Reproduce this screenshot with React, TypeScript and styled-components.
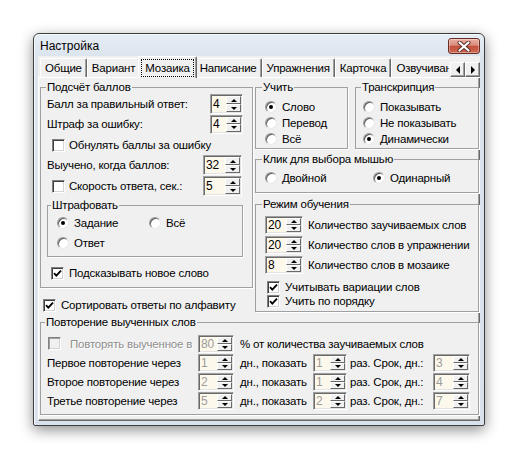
import React from "react";
import styled, { createGlobalStyle, css } from "styled-components";

const Global = createGlobalStyle`
  html, body { margin: 0; padding: 0; background: #ffffff; }
  body { font-family: "Liberation Sans", Arial, sans-serif; font-size: 11.5px; letter-spacing: -0.2px; color: #000; }
  * { box-sizing: border-box; }
`;

const Screen = styled.div`
  width: 517px;
  height: 458px;
  padding: 33px 0 0 33px;
`;

const Window = styled.div`
  width: 452px;
  height: 393px;
  border: 1px solid #3d3d3d;
  border-radius: 6px 6px 2px 2px;
  background: linear-gradient(#e6edf5, #dbe3ed 24px, #d9e2ec);
  box-shadow: 0 4px 14px rgba(0, 0, 0, 0.45), inset 1px 1px 0 #f6f9fc;
  display: flex;
  flex-direction: column;
  padding: 0 4px 4px;
`;

const TitleBar = styled.div`
  height: 22px;
  flex-shrink: 0;
  display: flex;
  align-items: center;
  justify-content: space-between;
  padding: 2px 0 0 2px;
`;

const TitleText = styled.span`
  font-size: 12px;
  letter-spacing: 0;
  color: #000;
`;

const CloseButton = styled.div`
  width: 32px;
  height: 16px;
  border: 1px solid #6b2a20;
  border-radius: 3px;
  background: linear-gradient(#eab1a4, #d98a7b 45%, #c2503c 52%, #cf6a52);
  box-shadow: inset 0 0 0 1px rgba(255, 255, 255, 0.35);
  display: flex;
  align-items: center;
  justify-content: center;
`;

const Client = styled.div`
  flex: 1;
  min-height: 0;
  background: #f0f0f0;
  display: flex;
  flex-direction: column;
`;

const TabStrip = styled.div`
  height: 22px;
  flex-shrink: 0;
  display: flex;
  align-items: flex-end;
  box-shadow: inset 0 -1px 0 #ffffff;
`;

const TabList = styled.div`
  flex: 1;
  min-width: 0;
  height: 22px;
  overflow: hidden;
  display: flex;
  align-items: flex-end;
  padding-left: 2px;
`;

const Tab = styled.div<{ $active?: boolean }>`
  flex-shrink: 0;
  white-space: nowrap;
  height: 19px;
  margin-bottom: 1px;
  padding: 0 4px;
  line-height: 18px;
  border-top: 1px solid #ffffff;
  border-left: 1px solid #ffffff;
  border-right: 1px solid #696969;
  border-radius: 2px 2px 0 0;
  box-shadow: inset -1px 0 0 #a0a0a0;
  ${({ $active }) =>
    $active &&
    css`
      position: relative;
      z-index: 1;
      height: 22px;
      margin: 0 -2px 0 -2px;
      padding: 2px 2px 0;
      background: #f0f0f0;
      line-height: 17px;
    `}
`;

const FocusLabel = styled.span`
  display: block;
  outline: 1px dotted #000;
  outline-offset: -1px;
  padding: 0 4px;
  height: 18px;
  line-height: 18px;
`;

const ScrollPair = styled.div`
  display: flex;
  margin: 0 0 1px 1px;
`;

const ClassicButton = styled.div<{ $w: number; $h: number }>`
  width: ${({ $w }) => $w}px;
  height: ${({ $h }) => $h}px;
  background: #f0f0f0;
  border: 1px solid;
  border-color: #ffffff #696969 #696969 #ffffff;
  box-shadow: inset -1px -1px 0 #a0a0a0;
  display: flex;
  align-items: center;
  justify-content: center;
`;

const Tri = styled.span<{ $dir: "up" | "down" | "left" | "right"; $s?: number }>`
  display: block;
  width: 0;
  height: 0;
  border-style: solid;
  ${({ $dir, $s = 3 }) => {
    switch ($dir) {
      case "up":
        return css`
          border-width: 0 ${$s}px ${$s}px;
          border-color: transparent transparent #000;
        `;
      case "down":
        return css`
          border-width: ${$s}px ${$s}px 0;
          border-color: #000 transparent transparent;
        `;
      case "left":
        return css`
          border-width: ${$s}px ${$s}px ${$s}px 0;
          border-color: transparent #000 transparent transparent;
        `;
      default:
        return css`
          border-width: ${$s}px 0 ${$s}px ${$s}px;
          border-color: transparent transparent transparent #000;
        `;
    }
  }}
`;

const Page = styled.div`
  flex: 1;
  min-height: 0;
  border-left: 1px solid #ffffff;
  border-right: 1px solid #696969;
  border-bottom: 1px solid #696969;
  box-shadow: inset -1px -1px 0 #a0a0a0;
  padding: 3px 0 0 1px;
`;

const TopGrid = styled.div`
  display: grid;
  grid-template-columns: 213px 224px;
  column-gap: 2px;
`;

const Column = styled.div`
  display: flex;
  flex-direction: column;
`;

const Group = styled.fieldset<{ $mt?: number }>`
  margin: ${({ $mt = 0 }) => $mt}px 0 0 0;
  padding: 0;
  min-width: 0;
  border: 1px solid #a0a0a0;
  box-shadow: 1px 1px 0 #ffffff;
`;

const Legend = styled.legend<{ $ml: number }>`
  margin-left: ${({ $ml }) => $ml}px;
  padding: 0 1px;
  line-height: 13px;
`;

const Body = styled.div<{ $p: string }>`
  padding: ${({ $p }) => $p};
  display: flex;
  flex-direction: column;
`;

const Row = styled.div<{ $h: number; $mt?: number }>`
  height: ${({ $h }) => $h}px;
  margin-top: ${({ $mt = 0 }) => $mt}px;
  display: flex;
  align-items: center;
  white-space: nowrap;
`;

const Label = styled.span<{ $dim?: boolean; $ml?: number }>`
  margin-left: ${({ $ml = 0 }) => $ml}px;
  ${({ $dim }) =>
    $dim &&
    css`
      color: #8e8e8e;
      text-shadow: 1px 1px 0 #ffffff;
    `}
`;

const Spacer = styled.span`
  flex: 1;
`;

const Item = styled.div<{ $w?: number; $ml?: number; $gap?: number }>`
  display: flex;
  align-items: center;
  gap: ${({ $gap = 4 }) => $gap}px;
  margin-left: ${({ $ml = 0 }) => $ml}px;
  ${({ $w }) => ($w ? `width: ${$w}px;` : "")}
  white-space: nowrap;
`;

const CheckBox = styled.span<{ $disabled?: boolean }>`
  width: 13px;
  height: 13px;
  flex-shrink: 0;
  background: ${({ $disabled }) => ($disabled ? "#f0f0f0" : "#ffffff")};
  border: 1px solid;
  border-color: #808080 #ffffff #ffffff #808080;
  box-shadow: inset 1px 1px 0 ${({ $disabled }) => ($disabled ? "#a0a0a0" : "#404040")},
    inset -1px -1px 0 #d4d4d4;
  display: flex;
  align-items: center;
  justify-content: center;
`;

const RadioCircle = styled.span`
  width: 12px;
  height: 12px;
  flex-shrink: 0;
  border-radius: 50%;
  background: #ffffff;
  border: 1px solid;
  border-color: #9a9a9a #e8e8e8 #e8e8e8 #9a9a9a;
  box-shadow: inset 1px 1px 0 #5a5a5a;
  display: flex;
  align-items: center;
  justify-content: center;
`;

const RadioDot = styled.span`
  width: 4px;
  height: 4px;
  border-radius: 50%;
  background: #000;
`;

const SpinBox = styled.div<{ $w: number; $h: number; $mr?: number }>`
  width: ${({ $w }) => $w}px;
  height: ${({ $h }) => $h}px;
  margin-right: ${({ $mr = 0 }) => $mr}px;
  flex-shrink: 0;
  display: flex;
  background: #fdf8ec;
  border: 1px solid;
  border-color: #a0a0a0 #ffffff #ffffff #a0a0a0;
  box-shadow: inset 1px 1px 0 #696969, inset -1px -1px 0 #e3e3e3;
  padding: 1px;
`;

const SpinValue = styled.div<{ $dim?: boolean }>`
  flex: 1;
  padding-left: 1px;
  display: flex;
  align-items: center;
  font-size: 12px;
  color: ${({ $dim }) => ($dim ? "#9c9c9c" : "#000")};
`;

const SpinButtons = styled.div`
  width: 15px;
  display: flex;
  flex-direction: column;
`;

const SpinBtn = styled.div`
  flex: 1;
  background: #f0f0f0;
  border: 1px solid;
  border-color: #ffffff #696969 #696969 #ffffff;
  display: flex;
  align-items: center;
  justify-content: center;
`;

const RepeatGrid = styled.div`
  display: grid;
  grid-template-columns: 151px 36px 79px 34px 86px 37px;
  grid-auto-rows: 19px;
  align-items: center;
  white-space: nowrap;
`;

const Cell = styled.div<{ $pl?: number; $span?: boolean }>`
  display: flex;
  align-items: center;
  padding-left: ${({ $pl = 0 }) => $pl}px;
  ${({ $span }) => ($span ? "grid-column: 3 / -1;" : "")}
`;

const TopPair = styled.div`
  display: grid;
  grid-template-columns: 93px 124px;
  column-gap: 7px;
`;

const RepeatGroup = styled(Group)`
  width: 439px;
`;

function Check({ checked, disabled }: { checked?: boolean; disabled?: boolean }) {
  return (
    <CheckBox $disabled={disabled}>
      {checked && (
        <svg width="9" height="9" viewBox="0 0 9 9">
          <path d="M1 4.2 L3.3 6.6 L8 1.6" fill="none" stroke="#000" strokeWidth="1.8" />
        </svg>
      )}
    </CheckBox>
  );
}

function CheckItem({
  text,
  checked,
  disabled,
  ml,
  gap,
}: {
  text: string;
  checked?: boolean;
  disabled?: boolean;
  ml?: number;
  gap?: number;
}) {
  return (
    <Item $ml={ml} $gap={gap}>
      <Check checked={checked} disabled={disabled} />
      <Label $dim={disabled}>{text}</Label>
    </Item>
  );
}

function Radio({ text, checked, w, ml }: { text: string; checked?: boolean; w?: number; ml?: number }) {
  return (
    <Item $w={w} $ml={ml} $gap={5}>
      <RadioCircle>{checked && <RadioDot />}</RadioCircle>
      <span>{text}</span>
    </Item>
  );
}

function Spin({
  value,
  w,
  h = 19,
  dim,
  mr,
}: {
  value: string;
  w: number;
  h?: number;
  dim?: boolean;
  mr?: number;
}) {
  return (
    <SpinBox $w={w} $h={h} $mr={mr}>
      <SpinValue $dim={dim}>{value}</SpinValue>
      <SpinButtons>
        <SpinBtn>
          <Tri $dir="up" />
        </SpinBtn>
        <SpinBtn>
          <Tri $dir="down" />
        </SpinBtn>
      </SpinButtons>
    </SpinBox>
  );
}

const tabs = ["Общие", "Вариант", "Мозаика", "Написание", "Упражнения", "Карточка", "Озвучивание"];

const repeatRows = [
  { label: "Первое повторение через", a: "1", b: "1", c: "3" },
  { label: "Второе повторение через", a: "2", b: "1", c: "4" },
  { label: "Третье повторение через", a: "5", b: "2", c: "7" },
];

export default function App() {
  return (
    <Screen>
      <Global />
      <Window>
        <TitleBar>
          <TitleText>Настройка</TitleText>
          <CloseButton>
            <svg width="14" height="11" viewBox="0 0 14 11">
              <path d="M2.5 1.5 L11.5 9.5 M11.5 1.5 L2.5 9.5" stroke="#5a2a22" strokeWidth="4" strokeLinecap="round" />
              <path d="M2.5 1.5 L11.5 9.5 M11.5 1.5 L2.5 9.5" stroke="#ffffff" strokeWidth="2.2" strokeLinecap="round" />
            </svg>
          </CloseButton>
        </TitleBar>
        <Client>
          <TabStrip>
            <TabList>
              {tabs.map((t) =>
                t === "Мозаика" ? (
                  <Tab key={t} $active>
                    <FocusLabel>{t}</FocusLabel>
                  </Tab>
                ) : (
                  <Tab key={t}>{t}</Tab>
                )
              )}
            </TabList>
            <ScrollPair>
              <ClassicButton $w={15} $h={15}>
                <Tri $dir="left" $s={4} />
              </ClassicButton>
              <ClassicButton $w={15} $h={15}>
                <Tri $dir="right" $s={4} />
              </ClassicButton>
            </ScrollPair>
          </TabStrip>
          <Page>
            <TopGrid>
              <Column>
                <Group>
                  <Legend $ml={5}>Подсчёт баллов</Legend>
                  <Body $p="0 9px 6px 6px">
                    <Row $h={20}>
                      <span>Балл за правильный ответ:</span>
                      <Spacer />
                      <Spin value="4" w={33} h={20} />
                    </Row>
                    <Row $h={20}>
                      <span>Штраф за ошибку:</span>
                      <Spacer />
                      <Spin value="4" w={33} h={19} />
                    </Row>
                    <Row $h={20} $mt={1}>
                      <CheckItem text="Обнулять баллы за ошибку" ml={5} />
                    </Row>
                    <Row $h={20}>
                      <span>Выучено, когда баллов:</span>
                      <Spacer />
                      <Spin value="32" w={39} h={20} mr={1} />
                    </Row>
                    <Row $h={20} $mt={1}>
                      <CheckItem text="Скорость ответа, сек.:" ml={5} />
                      <Spacer />
                      <Spin value="5" w={39} h={20} mr={1} />
                    </Row>
                    <Group $mt={3}>
                      <Legend $ml={3}>Штрафовать</Legend>
                      <Body $p="1px 4px 3px 9px">
                        <Row $h={20}>
                          <Radio text="Задание" checked w={92} />
                          <Radio text="Всё" />
                        </Row>
                        <Row $h={20}>
                          <Radio text="Ответ" />
                        </Row>
                      </Body>
                    </Group>
                    <Row $h={16} $mt={8}>
                      <CheckItem text="Подсказывать новое слово" checked ml={4} gap={5} />
                    </Row>
                  </Body>
                </Group>
                <Row $h={14} $mt={10}>
                  <CheckItem text="Сортировать ответы по алфавиту" checked ml={3} gap={5} />
                </Row>
              </Column>
              <Column>
                <TopPair>
                  <Group>
                    <Legend $ml={6}>Учить</Legend>
                    <Body $p="5px 0 1px 9px">
                      <Row $h={16}>
                        <Radio text="Слово" checked />
                      </Row>
                      <Row $h={16}>
                        <Radio text="Перевод" />
                      </Row>
                      <Row $h={16}>
                        <Radio text="Всё" />
                      </Row>
                    </Body>
                  </Group>
                  <Group>
                    <Legend $ml={5}>Транскрипция</Legend>
                    <Body $p="5px 0 1px 7px">
                      <Row $h={16}>
                        <Radio text="Показывать" />
                      </Row>
                      <Row $h={16}>
                        <Radio text="Не показывать" />
                      </Row>
                      <Row $h={16}>
                        <Radio text="Динамически" checked />
                      </Row>
                    </Body>
                  </Group>
                </TopPair>
                <Group $mt={4}>
                  <Legend $ml={6}>Клик для выбора мышью</Legend>
                  <Body $p="4px 0 6px 9px">
                    <Row $h={16}>
                      <Radio text="Двойной" w={108} />
                      <Radio text="Одинарный" checked />
                    </Row>
                  </Body>
                </Group>
                <Group $mt={5}>
                  <Legend $ml={6}>Режим обучения</Legend>
                  <Body $p="4px 0 3px 9px">
                    <Row $h={20}>
                      <Spin value="20" w={38} h={18} />
                      <Label $ml={5}>Количество заучиваемых слов</Label>
                    </Row>
                    <Row $h={20}>
                      <Spin value="20" w={38} h={18} />
                      <Label $ml={5}>Количество слов в упражнении</Label>
                    </Row>
                    <Row $h={20}>
                      <Spin value="8" w={38} h={18} />
                      <Label $ml={5}>Количество слов в мозаике</Label>
                    </Row>
                    <Row $h={14} $mt={5}>
                      <CheckItem text="Учитывать вариации слов" checked ml={2} gap={5} />
                    </Row>
                    <Row $h={14}>
                      <CheckItem text="Учить по порядку" checked ml={2} gap={5} />
                    </Row>
                  </Body>
                </Group>
              </Column>
            </TopGrid>
            <RepeatGroup $mt={4}>
              <Legend $ml={4}>Повторение выученных слов</Legend>
              <Body $p="5px 0 4px 6px">
                <RepeatGrid>
                  <Cell>
                    <CheckItem text="Повторять выученное в" disabled ml={1} gap={9} />
                  </Cell>
                  <Cell>
                    <Spin value="80" w={36} h={18} dim />
                  </Cell>
                  <Cell $pl={6} $span>
                    % от количества заучиваемых слов
                  </Cell>
                  {repeatRows.map((r) => (
                    <React.Fragment key={r.label}>
                      <Cell>{r.label}</Cell>
                      <Cell>
                        <Spin value={r.a} w={36} h={18} dim />
                      </Cell>
                      <Cell $pl={6}>дн., показать</Cell>
                      <Cell>
                        <Spin value={r.b} w={34} h={18} dim />
                      </Cell>
                      <Cell $pl={3}>раз. Срок, дн.:</Cell>
                      <Cell>
                        <Spin value={r.c} w={37} h={18} dim />
                      </Cell>
                    </React.Fragment>
                  ))}
                </RepeatGrid>
              </Body>
            </RepeatGroup>
          </Page>
        </Client>
      </Window>
    </Screen>
  );
}
